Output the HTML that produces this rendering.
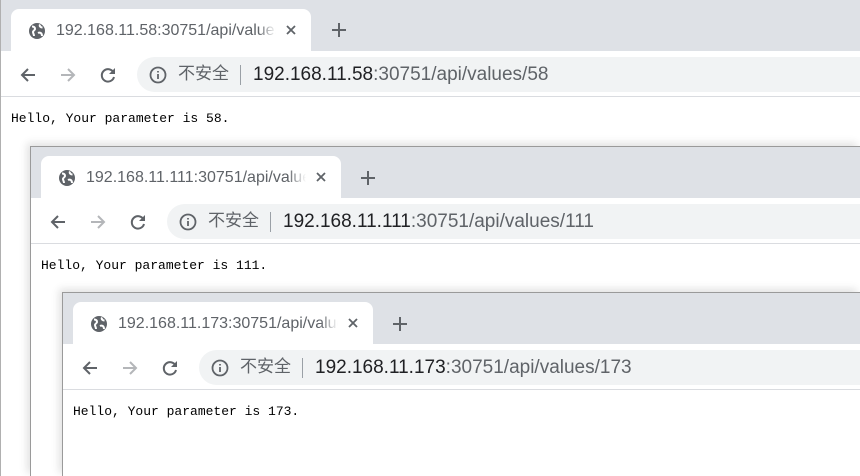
<!DOCTYPE html>
<html><head><meta charset="utf-8"><style>
*{margin:0;padding:0;box-sizing:border-box}
body{width:860px;height:476px;overflow:hidden;background:#fff;position:relative;font-family:"Liberation Sans","Noto Sans CJK SC",sans-serif}
.win{position:absolute;right:0;bottom:0;background:#fff;border-left:1px solid #9a9a9a;border-top:1px solid #9a9a9a;box-shadow:-3px -3px 8px rgba(0,0,0,.12)}
.strip{position:absolute;left:0;right:0;top:0;height:51px;background:#dee1e6}
.tab{position:absolute;left:10px;top:9px;width:300px;height:42px;background:#fff;border-radius:8px 8px 0 0}
.tab .t{position:absolute;left:45px;top:13px;font-size:16px;color:#5f6368;white-space:nowrap;width:220px;overflow:hidden}
.tab .t::after{content:"";position:absolute;right:0;top:0;width:18px;height:100%;background:linear-gradient(to right,rgba(255,255,255,0),#fff)}
.tab .fav{position:absolute;left:17px;top:13px}
.tab .x{position:absolute;left:273px;top:14px}
.tb{position:absolute;left:0;right:0;top:51px;height:46px;background:#fff;border-bottom:1px solid #dadce0}
.omni{position:absolute;left:136px;top:6px;right:0;height:35px;background:#f1f3f4;border-radius:18px 0 0 18px}
.omni .i{position:absolute;left:12px;top:9px}
.omni .ns{position:absolute;left:41px;top:5px;font-size:17px;color:#5f6368;line-height:24px}
.omni .bar{position:absolute;left:103px;top:8px;width:1px;height:20px;background:#9aa0a6}
.omni .u{position:absolute;left:116px;top:7px;font-size:19px;color:#202124;white-space:nowrap}
.omni .u span{color:#5f6368}
.ic{position:absolute;top:15px}
.body{position:absolute;left:10px;top:111px;font-family:"Liberation Mono",monospace;font-size:13px;color:#000}
</style></head><body>

<div class="win" style="left:0;top:0;border-top:none;box-shadow:none;border-left:1px solid #b0b0b0">
<div class="strip"></div>
<div class="tab">
<svg class="fav" width="18" height="18" viewBox="0 0 18 18"><circle cx="9" cy="9" r="8" fill="#5f6368"/><path d="M4 4.5c2 0 3 1 3 2.5s-2 1.5-2 3 1 2 1 4" stroke="#fff" stroke-width="2" fill="none"/><path d="M12 2.5c-1 2 1 3 2.5 3M10 11c2-1 4 0 4 3" stroke="#fff" stroke-width="2" fill="none"/></svg>
<div class="t">192.168.11.58:30751/api/values/58</div>
<svg class="x" width="14" height="14" viewBox="0 0 14 14"><path d="M3 3l8 8M11 3l-8 8" stroke="#5f6368" stroke-width="1.8"/></svg>
</div>
<svg width="18" height="18" viewBox="0 0 18 18" style="position:absolute;left:329px;top:21px"><path d="M9 2v14M2 9h14" stroke="#5f6368" stroke-width="2"/></svg>
<div class="tb">
<svg class="ic" style="left:18px" width="18" height="18" viewBox="0 0 18 18"><path d="M16 9H3M9 3L3 9l6 6" stroke="#5f6368" stroke-width="2" fill="none"/></svg>
<svg class="ic" style="left:58px" width="18" height="18" viewBox="0 0 18 18"><path d="M2 9h13M9 3l6 6-6 6" stroke="#b4b6b9" stroke-width="2" fill="none"/></svg>
<svg class="ic" style="left:98px" width="18" height="18" viewBox="0 0 18 18"><path d="M14.5 6.5A6.2 6.2 0 1 0 15 11" stroke="#5f6368" stroke-width="2" fill="none"/><path d="M16 2v6h-6z" fill="#5f6368"/></svg>
<div class="omni">
<svg class="i" width="18" height="18" viewBox="0 0 18 18"><circle cx="9" cy="9" r="7.5" stroke="#5f6368" stroke-width="1.8" fill="none"/><path d="M9 8v5M9 5v1.5" stroke="#5f6368" stroke-width="1.8"/></svg>
<div class="ns">不安全</div><div class="bar"></div>
<div class="u">192.168.11.58<span>:30751/api/values/58</span></div>
</div>
</div>
<div class="body">Hello, Your parameter is 58.</div>
</div>

<div class="win" style="left:30px;top:146px">
<div class="strip"></div>
<div class="tab">
<svg class="fav" width="18" height="18" viewBox="0 0 18 18"><circle cx="9" cy="9" r="8" fill="#5f6368"/><path d="M4 4.5c2 0 3 1 3 2.5s-2 1.5-2 3 1 2 1 4" stroke="#fff" stroke-width="2" fill="none"/><path d="M12 2.5c-1 2 1 3 2.5 3M10 11c2-1 4 0 4 3" stroke="#fff" stroke-width="2" fill="none"/></svg>
<div class="t">192.168.11.111:30751/api/values/111</div>
<svg class="x" width="14" height="14" viewBox="0 0 14 14"><path d="M3 3l8 8M11 3l-8 8" stroke="#5f6368" stroke-width="1.8"/></svg>
</div>
<svg width="18" height="18" viewBox="0 0 18 18" style="position:absolute;left:328px;top:22px"><path d="M9 2v14M2 9h14" stroke="#5f6368" stroke-width="2"/></svg>
<div class="tb">
<svg class="ic" style="left:18px" width="18" height="18" viewBox="0 0 18 18"><path d="M16 9H3M9 3L3 9l6 6" stroke="#5f6368" stroke-width="2" fill="none"/></svg>
<svg class="ic" style="left:58px" width="18" height="18" viewBox="0 0 18 18"><path d="M2 9h13M9 3l6 6-6 6" stroke="#b4b6b9" stroke-width="2" fill="none"/></svg>
<svg class="ic" style="left:98px" width="18" height="18" viewBox="0 0 18 18"><path d="M14.5 6.5A6.2 6.2 0 1 0 15 11" stroke="#5f6368" stroke-width="2" fill="none"/><path d="M16 2v6h-6z" fill="#5f6368"/></svg>
<div class="omni">
<svg class="i" width="18" height="18" viewBox="0 0 18 18"><circle cx="9" cy="9" r="7.5" stroke="#5f6368" stroke-width="1.8" fill="none"/><path d="M9 8v5M9 5v1.5" stroke="#5f6368" stroke-width="1.8"/></svg>
<div class="ns">不安全</div><div class="bar"></div>
<div class="u">192.168.11.111<span>:30751/api/values/111</span></div>
</div>
</div>
<div class="body">Hello, Your parameter is 111.</div>
</div>

<div class="win" style="left:62px;top:292px">
<div class="strip"></div>
<div class="tab">
<svg class="fav" width="18" height="18" viewBox="0 0 18 18"><circle cx="9" cy="9" r="8" fill="#5f6368"/><path d="M4 4.5c2 0 3 1 3 2.5s-2 1.5-2 3 1 2 1 4" stroke="#fff" stroke-width="2" fill="none"/><path d="M12 2.5c-1 2 1 3 2.5 3M10 11c2-1 4 0 4 3" stroke="#fff" stroke-width="2" fill="none"/></svg>
<div class="t">192.168.11.173:30751/api/values/173</div>
<svg class="x" width="14" height="14" viewBox="0 0 14 14"><path d="M3 3l8 8M11 3l-8 8" stroke="#5f6368" stroke-width="1.8"/></svg>
</div>
<svg width="18" height="18" viewBox="0 0 18 18" style="position:absolute;left:328px;top:22px"><path d="M9 2v14M2 9h14" stroke="#5f6368" stroke-width="2"/></svg>
<div class="tb">
<svg class="ic" style="left:18px" width="18" height="18" viewBox="0 0 18 18"><path d="M16 9H3M9 3L3 9l6 6" stroke="#5f6368" stroke-width="2" fill="none"/></svg>
<svg class="ic" style="left:58px" width="18" height="18" viewBox="0 0 18 18"><path d="M2 9h13M9 3l6 6-6 6" stroke="#b4b6b9" stroke-width="2" fill="none"/></svg>
<svg class="ic" style="left:98px" width="18" height="18" viewBox="0 0 18 18"><path d="M14.5 6.5A6.2 6.2 0 1 0 15 11" stroke="#5f6368" stroke-width="2" fill="none"/><path d="M16 2v6h-6z" fill="#5f6368"/></svg>
<div class="omni">
<svg class="i" width="18" height="18" viewBox="0 0 18 18"><circle cx="9" cy="9" r="7.5" stroke="#5f6368" stroke-width="1.8" fill="none"/><path d="M9 8v5M9 5v1.5" stroke="#5f6368" stroke-width="1.8"/></svg>
<div class="ns">不安全</div><div class="bar"></div>
<div class="u">192.168.11.173<span>:30751/api/values/173</span></div>
</div>
</div>
<div class="body">Hello, Your parameter is 173.</div>
</div>

</body></html>
